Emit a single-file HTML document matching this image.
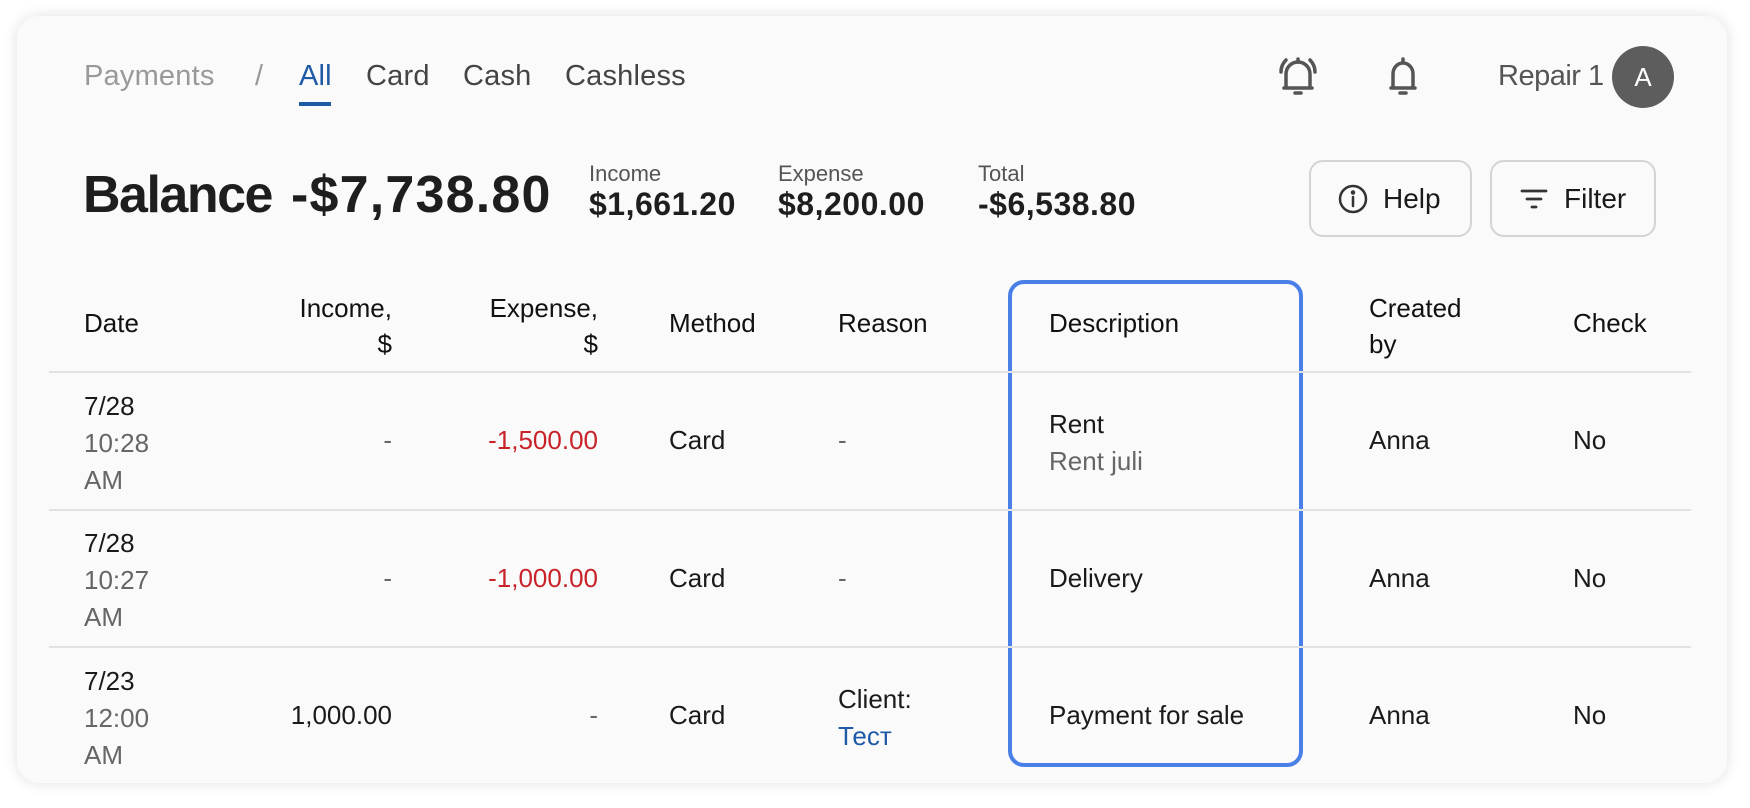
<!DOCTYPE html>
<html><head><meta charset="utf-8"><style>
*{margin:0;padding:0;box-sizing:border-box}
body{width:1750px;height:808px;background:#fff;font-family:"Liberation Sans",Arial,sans-serif;position:relative;overflow:hidden;color:#1a1a1a}
.card{position:absolute;left:17px;top:16px;width:1710px;height:767px;background:#fafafa;border-radius:22px;box-shadow:0 0 14px rgba(0,0,0,.13)}
.a{position:absolute;white-space:nowrap;letter-spacing:0}
.nav{font-size:29px;top:60px;color:#444;letter-spacing:0.2px}
.h{font-size:26px;color:#111}
.r{font-size:26px}
.g{color:#666}
.line{position:absolute;left:49px;width:1642px;height:2px;background:#e2e2e2}
.btn{position:absolute;top:160px;height:77px;border:2px solid #d4d4d4;border-radius:14px;background:#fafafa;font-size:28px;display:flex;align-items:center;gap:14px;padding-left:26px}
</style></head><body>
<div class="card"></div>
<div class="a nav" style="left:84px;color:#999">Payments</div>
<div class="a nav" style="left:255px;color:#999">/</div>
<div class="a nav" style="left:299px;color:#1f5aa6">All</div>
<div style="position:absolute;left:299px;top:102px;width:32px;height:4px;background:#1f5aa6"></div>
<div class="a nav" style="left:366px">Card</div>
<div class="a nav" style="left:463px">Cash</div>
<div class="a nav" style="left:565px">Cashless</div>

<svg style="position:absolute;left:1275px;top:52px" width="46" height="48" viewBox="0 0 46 48" fill="none" stroke="#555" stroke-width="3.5" stroke-linecap="round" stroke-linejoin="round">
<path d="M11 36V22a12 12 0 0 1 24 0v14H9h28"/><path d="M23 7v3"/><path d="M20 41h6"/><path d="M6 20c0-5 2-9 5-12"/><path d="M40 20c0-5-2-9-5-12"/></svg>
<svg style="position:absolute;left:1380px;top:52px" width="46" height="48" viewBox="0 0 46 48" fill="none" stroke="#555" stroke-width="3.5" stroke-linecap="round" stroke-linejoin="round">
<path d="M13 36V22a10 11 0 0 1 20 0v14H11h24"/><path d="M23 7v3"/><path d="M20 41h6"/></svg>
<div class="a nav" style="left:1498px;color:#555;letter-spacing:-0.5px">Repair 1</div>
<div style="position:absolute;left:1612px;top:46px;width:62px;height:62px;border-radius:50%;background:#5d5d5d;color:#fff;font-size:26px;display:flex;align-items:center;justify-content:center">A</div>

<div class="a" style="left:83px;top:165px;font-size:52px;font-weight:bold;color:#1e1e1e;letter-spacing:-1.5px">Balance</div>
<div class="a" style="left:291px;top:165px;font-size:52px;font-weight:bold;color:#1e1e1e;letter-spacing:1.2px">-$7,738.80</div>
<div class="a" style="left:589px;top:161px;font-size:22px;color:#555">Income</div>
<div class="a" style="left:589px;top:186px;font-size:32px;font-weight:bold;color:#1e1e1e;letter-spacing:0.5px">$1,661.20</div>
<div class="a" style="left:778px;top:161px;font-size:22px;color:#555">Expense</div>
<div class="a" style="left:778px;top:186px;font-size:32px;font-weight:bold;color:#1e1e1e;letter-spacing:0.5px">$8,200.00</div>
<div class="a" style="left:978px;top:161px;font-size:22px;color:#555">Total</div>
<div class="a" style="left:978px;top:186px;font-size:32px;font-weight:bold;color:#1e1e1e;letter-spacing:0.5px">-$6,538.80</div>

<div class="btn" style="left:1309px;width:163px"><svg width="32" height="32" viewBox="0 0 32 32" fill="none" stroke="#333" stroke-width="2.5"><circle cx="16" cy="16" r="13"/><path d="M16 14v9" stroke-linecap="round"/><circle cx="16" cy="9.5" r="1" fill="#333"/></svg>Help</div>
<div class="btn" style="left:1490px;width:166px"><svg width="32" height="32" viewBox="0 0 32 32" fill="none" stroke="#333" stroke-width="2.8" stroke-linecap="round"><path d="M4 8h24M9 16h14M14 24h4"/></svg>Filter</div>

<div style="position:absolute;left:1008px;top:280px;width:295px;height:487px;border:4px solid #4a7fe8;border-radius:16px"></div>

<div class="a h" style="left:84px;top:308px">Date</div>
<div class="a h" style="left:270px;top:290px;width:122px;text-align:right;line-height:36px">Income,<br>$</div>
<div class="a h" style="left:460px;top:290px;width:138px;text-align:right;line-height:36px">Expense,<br>$</div>
<div class="a h" style="left:669px;top:308px">Method</div>
<div class="a h" style="left:838px;top:308px">Reason</div>
<div class="a h" style="left:1049px;top:308px">Description</div>
<div class="a h" style="left:1369px;top:290px;line-height:36px">Created<br>by</div>
<div class="a h" style="left:1573px;top:308px">Check</div>
<div class="line" style="top:371px"></div>

<div class="a r" style="left:84px;top:388px;line-height:37px">7/28<br><span class="g">10:28<br>AM</span></div>
<div class="a r g" style="left:280px;top:425px;width:112px;text-align:right">-</div>
<div class="a r" style="left:440px;top:425px;width:158px;text-align:right;color:#c8232a">-1,500.00</div>
<div class="a r" style="left:669px;top:425px">Card</div>
<div class="a r g" style="left:838px;top:425px">-</div>
<div class="a r" style="left:1049px;top:406px;line-height:37px">Rent<br><span class="g">Rent juli</span></div>
<div class="a r" style="left:1369px;top:425px">Anna</div>
<div class="a r" style="left:1573px;top:425px">No</div>
<div class="line" style="top:509px"></div>

<div class="a r" style="left:84px;top:525px;line-height:37px">7/28<br><span class="g">10:27<br>AM</span></div>
<div class="a r g" style="left:280px;top:563px;width:112px;text-align:right">-</div>
<div class="a r" style="left:440px;top:563px;width:158px;text-align:right;color:#c8232a">-1,000.00</div>
<div class="a r" style="left:669px;top:563px">Card</div>
<div class="a r g" style="left:838px;top:563px">-</div>
<div class="a r" style="left:1049px;top:563px">Delivery</div>
<div class="a r" style="left:1369px;top:563px">Anna</div>
<div class="a r" style="left:1573px;top:563px">No</div>
<div class="line" style="top:646px"></div>

<div class="a r" style="left:84px;top:663px;line-height:37px">7/23<br><span class="g">12:00<br>AM</span></div>
<div class="a r" style="left:250px;top:700px;width:142px;text-align:right">1,000.00</div>
<div class="a r g" style="left:440px;top:700px;width:158px;text-align:right">-</div>
<div class="a r" style="left:669px;top:700px">Card</div>
<div class="a r" style="left:838px;top:681px;line-height:37px">Client:<br><span style="color:#1f5aa6">Тест</span></div>
<div class="a r" style="left:1049px;top:700px">Payment for sale</div>
<div class="a r" style="left:1369px;top:700px">Anna</div>
<div class="a r" style="left:1573px;top:700px">No</div>
</body></html>
